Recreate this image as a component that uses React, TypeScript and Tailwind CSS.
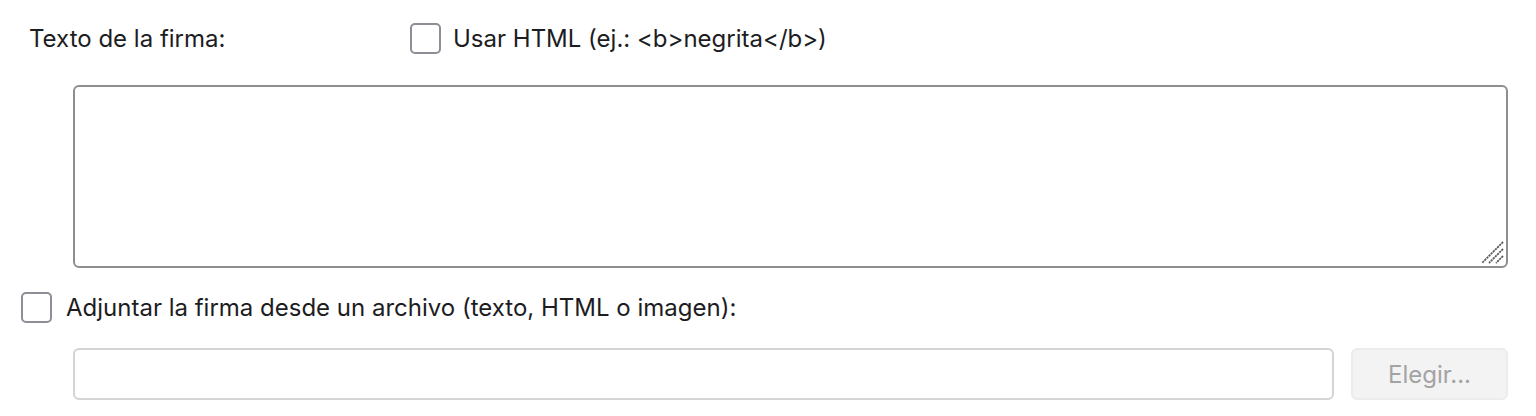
export default function App() {
  return (
    <div className="h-[416px] w-[1536px] bg-white text-[#1d1d1f] [font-family:Inter,'Noto_Sans',sans-serif] text-[24px] leading-[31px]">
      <div className="flex items-center pt-[23px]">
        <span className="ml-[29px] w-[381px]">Texto de la firma:</span>
        <span className="h-[31px] w-[31px] rounded-[5px] border-2 border-[#8f8d96] bg-white" />
        <span className="ml-[12px]">Usar HTML (ej.: &lt;b&gt;negrita&lt;/b&gt;)</span>
      </div>
      <div className="relative ml-[73px] mr-[28px] mt-[31px]">
        <textarea className="block h-[183px] w-full resize-none rounded-[6px] border-2 border-[#8e8e8e] bg-white outline-none" />
        <svg className="absolute bottom-[3px] right-[3px]" width="26" height="26" viewBox="0 0 26 26">
          <path d="M24 3 L3 24 M24 10 L10 24 M24 17 L17 24" stroke="#5a5a5a" strokeWidth="1.8" strokeDasharray="2.2 0.8" />
        </svg>
      </div>
      <div className="mt-[24px] flex items-center">
        <span className="ml-[21px] h-[31px] w-[31px] rounded-[5px] border-2 border-[#8f8d96] bg-white" />
        <span className="ml-[14px]">Adjuntar la firma desde un archivo (texto, HTML o imagen):</span>
      </div>
      <div className="ml-[73px] mr-[28px] mt-[25px] flex gap-[17px]">
        <input className="h-[52px] flex-1 rounded-[6px] border-2 border-[#d4d4d4] bg-white outline-none" />
        <button className="h-[52px] w-[157px] rounded-[6px] border-2 border-[#ececec] bg-[#f3f3f3] text-[#a3a3a3]">Elegir...</button>
      </div>
    </div>
  )
}
